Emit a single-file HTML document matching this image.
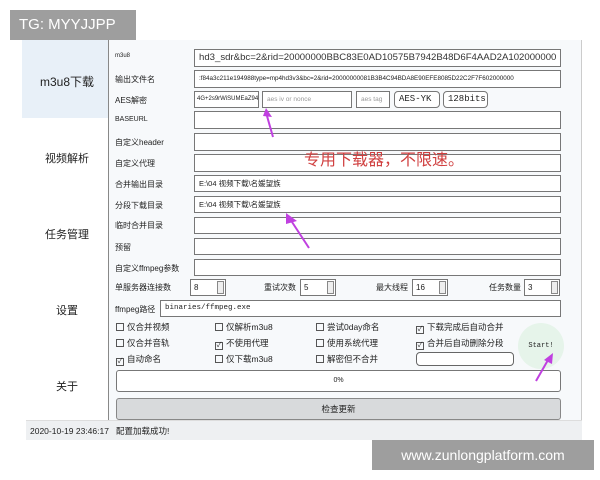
<!DOCTYPE html>
<html><head><meta charset="utf-8"><style>
*{box-sizing:border-box;margin:0;padding:0}
body{width:600px;height:480px;background:#fff;position:relative;overflow:hidden;font-family:"Liberation Sans","Noto Sans CJK SC",sans-serif;color:#222}
.abs{position:absolute}
.tg{left:10px;top:10px;width:126px;height:30px;background:#9e9e9e;color:#fff;font-size:15px;line-height:30px;padding-left:9px}
.win{left:26px;top:40px;width:556px;height:400px;background:#f7f9fb;border-right:1px solid #ccc}
.side{left:26px;top:40px;width:82px;height:380px;background:#fff}
.sel{left:22px;top:40px;width:86px;height:78px;background:#e8f0f8}
.vd{left:108px;top:40px;width:1px;height:380px;background:#888}
.sl{font-size:11px;width:82px;text-align:center;left:26px}
.lb{left:115px;font-size:8px;color:#222}
.in{left:194px;width:367px;background:#fff;border:1px solid #777;font-size:8px;padding-left:4px;white-space:nowrap;overflow:hidden}
.cb{font-size:8.5px}
.cb i{display:inline-block;width:8px;height:8px;border:1px solid #555;vertical-align:-1px;margin-right:3px;font-style:normal;font-size:7px;line-height:6px;text-align:center}
.status{left:26px;top:420px;width:556px;height:20px;background:#eef0f2;font-size:8.5px;line-height:20px;padding-left:4px;border-top:1px solid #ddd}
.wm{left:372px;top:440px;width:222px;height:30px;background:#9e9e9e;color:#fff;font-size:14px;line-height:30px;text-align:center}
.spin{background:#fff;border:1px solid #777;font-size:8px;height:17px;padding-left:3px;line-height:15px}
.spin b{position:absolute;right:1px;top:1px;width:7px;height:13px;border:1px solid #888;background:#eee}
</style></head><body>
<div class="abs tg">TG: MYYJJPP</div>
<div class="abs win"></div>
<div class="abs side"></div>
<div class="abs sel"></div>
<div class="abs vd"></div>
<div class="abs sl" style="top:73px;font-size:12px">m3u8下载</div>
<div class="abs sl" style="top:150px">视频解析</div>
<div class="abs sl" style="top:226px">任务管理</div>
<div class="abs sl" style="top:302px">设置</div>
<div class="abs sl" style="top:378px">关于</div>

<div class="abs lb" style="top:53px;font-size:6px">m3u8</div>
<div class="abs in" style="top:49px;height:18px;font-size:9.6px;line-height:16px;color:#333">hd3_sdr&amp;bc=2&amp;rid=20000000BBC83E0AD10575B7942B48D6F4AAD2A102000000</div>
<div class="abs lb" style="top:74px">输出文件名</div>
<div class="abs in" style="top:70px;height:18px;font-size:6.3px;line-height:16px">:f84a3c211e194988type=mp4hd3v3&amp;bc=2&amp;rid=20000000081B3B4C94BDA8E90EFE8085D22C2F7F602000000</div>
<div class="abs lb" style="top:95px">AES解密</div>
<div class="abs in" style="top:91px;width:65px;height:17px;font-size:6px;line-height:15px;padding-left:2px">4G+2s9rWiSUMEaZ947m4w==</div>
<div class="abs in" style="top:91px;left:262px;width:90px;height:17px;font-size:6.5px;line-height:15px;color:#999">aes iv or nonce</div>
<div class="abs in" style="top:91px;left:356px;width:34px;height:17px;font-size:6.5px;line-height:15px;color:#999">aes tag</div>
<div class="abs in" style="top:91px;left:394px;width:46px;height:17px;border-radius:4px;font-family:'Liberation Mono',monospace;font-size:9px;line-height:15px">AES-YK</div>
<div class="abs in" style="top:91px;left:443px;width:45px;height:17px;border-radius:4px;font-family:'Liberation Mono',monospace;font-size:9px;line-height:15px">128bits</div>
<div class="abs lb" style="top:116px;font-size:7px">BASEURL</div>
<div class="abs in" style="top:111px;height:18px"></div>
<div class="abs lb" style="top:137px">自定义header</div>
<div class="abs in" style="top:133px;height:18px"></div>
<div class="abs lb" style="top:158px">自定义代理</div>
<div class="abs in" style="top:154px;height:18px"></div>
<div class="abs" style="left:304px;top:146px;font-size:16px;color:#d04040">专用下载器，不限速。</div>
<div class="abs lb" style="top:179px">合并输出目录</div>
<div class="abs in" style="top:175px;height:17px;line-height:15px;font-size:7.5px">E:\04 视频下载\名媛望族</div>
<div class="abs lb" style="top:200px">分段下载目录</div>
<div class="abs in" style="top:196px;height:17px;line-height:15px;font-size:7.5px">E:\04 视频下载\名媛望族</div>
<div class="abs lb" style="top:220px">临时合并目录</div>
<div class="abs in" style="top:217px;height:17px"></div>
<div class="abs lb" style="top:242px">预留</div>
<div class="abs in" style="top:238px;height:17px"></div>
<div class="abs lb" style="top:263px">自定义ffmpeg参数</div>
<div class="abs in" style="top:259px;height:17px"></div>

<div class="abs lb" style="top:282px">单服务器连接数</div>
<div class="abs spin" style="left:190px;top:279px;width:36px">8<b></b></div>
<div class="abs lb" style="left:264px;top:282px">重试次数</div>
<div class="abs spin" style="left:300px;top:279px;width:36px">5<b></b></div>
<div class="abs lb" style="left:376px;top:282px">最大线程</div>
<div class="abs spin" style="left:412px;top:279px;width:36px">16<b></b></div>
<div class="abs lb" style="left:489px;top:282px">任务数量</div>
<div class="abs spin" style="left:524px;top:279px;width:36px">3<b></b></div>
<div class="abs lb" style="top:304px">ffmpeg路径</div>
<div class="abs in" style="left:160px;width:401px;top:300px;height:17px;line-height:15px;font-size:7.5px;font-family:'Liberation Mono',monospace">binaries/ffmpeg.exe</div>

<div class="abs cb" style="left:116px;top:321px"><i></i>仅合并视频</div>
<div class="abs cb" style="left:215px;top:321px"><i></i>仅解析m3u8</div>
<div class="abs cb" style="left:316px;top:321px"><i></i>尝试0day命名</div>
<div class="abs cb" style="left:416px;top:321px"><i>✓</i>下载完成后自动合并</div>
<div class="abs cb" style="left:116px;top:337px"><i></i>仅合并音轨</div>
<div class="abs cb" style="left:215px;top:337px"><i>✓</i>不使用代理</div>
<div class="abs cb" style="left:316px;top:337px"><i></i>使用系统代理</div>
<div class="abs cb" style="left:416px;top:337px"><i>✓</i>合并后自动删除分段</div>
<div class="abs cb" style="left:116px;top:353px"><i>✓</i>自动命名</div>
<div class="abs cb" style="left:215px;top:353px"><i></i>仅下载m3u8</div>
<div class="abs cb" style="left:316px;top:353px"><i></i>解密但不合并</div>
<div class="abs" style="left:416px;top:352px;width:98px;height:14px;border:1px solid #666;border-radius:4px;background:#fff"></div>
<div class="abs" style="left:518px;top:323px;width:46px;height:46px;border-radius:50%;background:#e6f4ea;font-size:7px;text-align:center;line-height:46px;font-family:'Liberation Mono',monospace">Start!</div>
<div class="abs" style="left:116px;top:370px;width:445px;height:22px;border:1px solid #777;border-radius:3px;background:#fff;font-size:7px;text-align:center;line-height:20px">0%</div>
<div class="abs" style="left:116px;top:398px;width:445px;height:22px;border:1px solid #888;border-radius:3px;background:#d8dadc;font-size:8.5px;text-align:center;line-height:20px">检查更新</div>
<div class="abs status">2020-10-19 23:46:17 &nbsp; 配置加载成功!</div>
<div class="abs wm">www.zunlongplatform.com</div>
<svg class="abs" style="left:0;top:0" width="600" height="480">
<g fill="#c040e0" stroke="#c040e0" stroke-width="2">
<line x1="273" y1="137" x2="267" y2="116"/><polygon points="263,116 272,117 266,108" stroke="none"/>
<line x1="309" y1="248" x2="292" y2="222"/><polygon points="286,224 297,221 286,213" stroke="none"/>
<line x1="536" y1="381" x2="548" y2="360"/><polygon points="544,360 552,364 553,353" stroke="none"/>
</g></svg>
</body></html>
